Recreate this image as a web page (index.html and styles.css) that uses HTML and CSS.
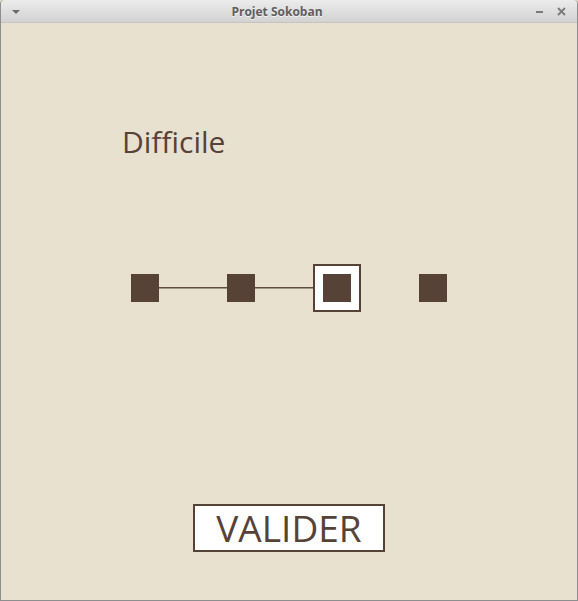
FILE: index.html
```html
<!DOCTYPE html>
<html lang="fr">
<head>
<meta charset="utf-8">
<title>Projet Sokoban</title>
<link rel="stylesheet" href="styles.css">
</head>
<body>
<div class="window">
  <div class="titlebar">
    <svg class="menu-icon" width="10" height="6" viewBox="0 0 10 6"><path d="M1 1 L9 1 L5 5 Z" fill="#6a6a6a"/></svg>
    <span class="title">Projet Sokoban</span>
    <div class="controls">
      <svg width="9" height="9" viewBox="0 0 9 9"><path d="M1 5 H8" stroke="#7a7a7a" stroke-width="2"/></svg>
      <svg width="9" height="9" viewBox="0 0 9 9"><path d="M1 1 L8 8 M8 1 L1 8" stroke="#7a7a7a" stroke-width="1.8"/></svg>
    </div>
  </div>
  <div class="content">
    <div class="label">Difficile</div>
    <div class="slider">
      <div class="node"></div>
      <div class="link"></div>
      <div class="node"></div>
      <div class="link"></div>
      <div class="node selected"></div>
      <div class="link empty"></div>
      <div class="node"></div>
    </div>
    <div class="actions">
      <button class="validate">VALIDER</button>
    </div>
  </div>
</div>
</body>
</html>
```
FILE: styles.css
```css
* { box-sizing: border-box; }
html, body { margin: 0; padding: 0; }
body { width: 578px; height: 601px; overflow: hidden; background: #e8e1d0; }

.window {
  width: 578px;
  height: 601px;
  border: 1px solid #8e8e8e;
  border-top: none;
  border-radius: 4px 4px 0 0;
  background: #e8e1d0;
  display: flex;
  flex-direction: column;
  overflow: hidden;
}

.titlebar {
  height: 23px;
  flex: none;
  display: flex;
  align-items: center;
  position: relative;
  background: linear-gradient(#ececec, #d2d2d2);
  border-bottom: 1px solid #c4c4c4;
  border-radius: 4px 4px 0 0;
}
.menu-icon { margin-left: 10px; margin-top: 1px; }
.title {
  flex: 1;
  text-align: center;
  font-family: "Open Sans", sans-serif;
  font-weight: bold;
  font-size: 12px;
  color: #5e5e5e;
  text-shadow: 0 1px 0 #f4f4f4;
  margin-right: 2px;
}
.controls { display: flex; gap: 13px; margin-right: 11px; }

.content {
  flex: 1;
  display: flex;
  flex-direction: column;
}

.label {
  font-family: "Open Sans", sans-serif;
  font-size: 30px;
  line-height: 40px;
  color: #574238;
  margin: 99px 0 0 121px;
}

.slider {
  display: flex;
  align-items: center;
  margin: 112px 0 0 130px;
  height: 28px;
}
.node {
  width: 28px;
  height: 28px;
  background: #574238;
  flex: none;
  position: relative;
}
.node.selected {
  box-shadow: 0 0 0 8px #ffffff, 0 0 0 10px #574238;
}
.link {
  width: 68px;
  height: 2px;
  flex: none;
  margin-top: -1px;
  background: linear-gradient(#5e4a40 50%, #a39585 50%);
}
.link.empty { background: none; }

.actions {
  display: flex;
  justify-content: center;
  margin-top: 202px;
}
.validate {
  width: 192px;
  height: 48px;
  border: 2px solid #574238;
  background: #ffffff;
  font-family: "Open Sans", sans-serif;
  font-size: 37px;
  line-height: 44px;
  color: #574238;
  padding: 0;
  margin: 0;
}
```
